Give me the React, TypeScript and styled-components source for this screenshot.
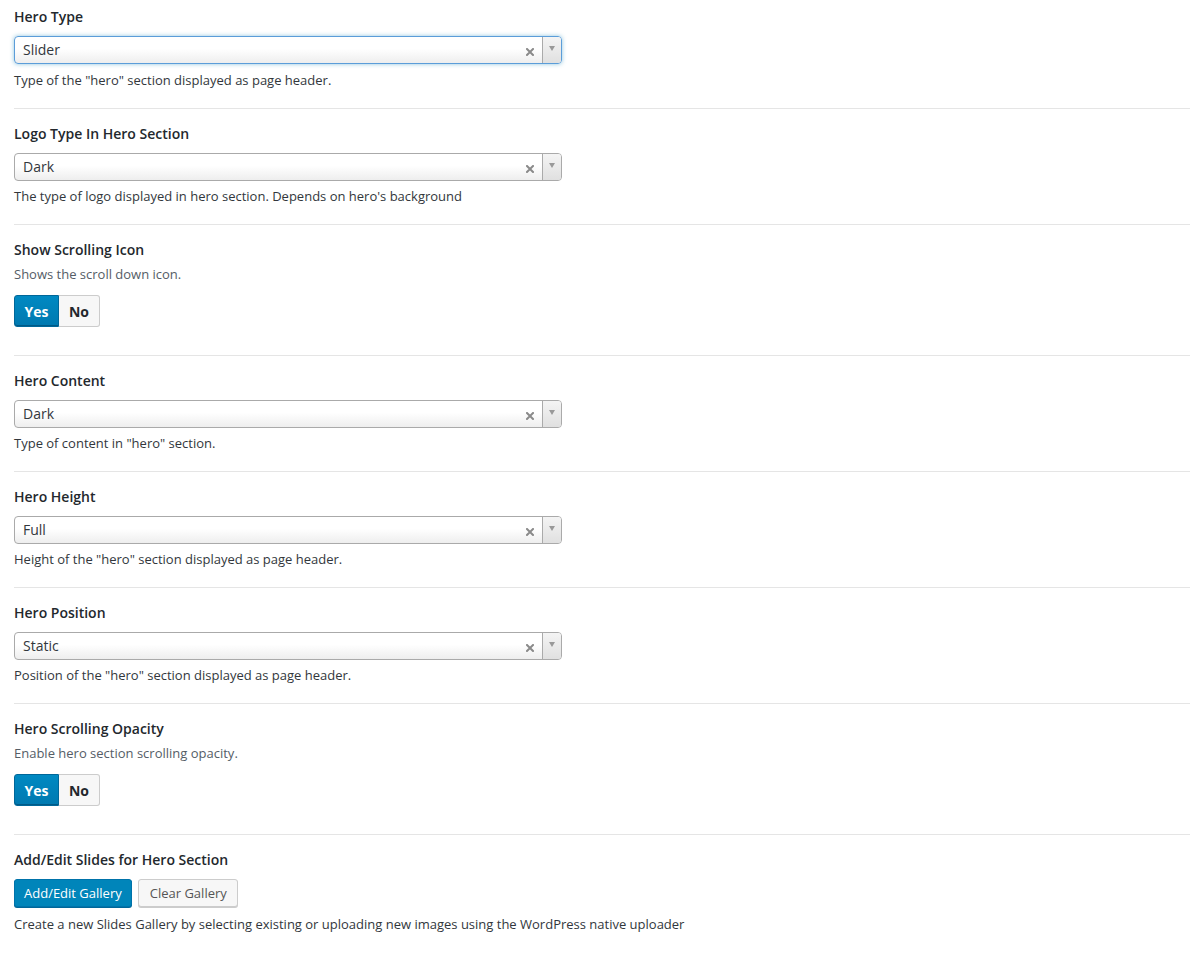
import React from "react";
import styled, { createGlobalStyle, css } from "styled-components";

const Global = createGlobalStyle`
  html, body { margin: 0; padding: 0; background: #fff; }
  body { font-family: "Open Sans", "Noto Sans", "Liberation Sans", sans-serif; color: #23282d; }
  * { box-sizing: border-box; }
`;

const Page = styled.div`
  padding: 0 0 0 14px;
  width: 1190px;
`;

const Section = styled.div<{ $first?: boolean; $last?: boolean; $toggle?: boolean }>`
  display: flex;
  flex-direction: column;
  align-items: flex-start;
  padding: ${(p) => (p.$first ? "7px" : "15px")} 0 ${(p) => (p.$toggle ? "28px" : "19px")} 0;
  border-bottom: ${(p) => (p.$last ? "none" : "1px solid #e5e5e5")};
`;

const Label = styled.div`
  font-size: 14px;
  font-weight: 600;
  line-height: 20px;
  color: #23282d;
`;

const Desc = styled.div<{ $gap?: number }>`
  font-size: 13px;
  line-height: 18px;
  color: #32373c;
  margin-top: ${(p) => p.$gap ?? 6}px;
`;

const SubDesc = styled.div`
  font-size: 13px;
  line-height: 18px;
  color: #555d66;
  margin-top: 5px;
`;

const SelectBox = styled.div<{ $focus?: boolean }>`
  margin-top: 9px;
  width: 548px;
  height: 28px;
  display: flex;
  align-items: stretch;
  border: 1px solid ${(p) => (p.$focus ? "#5b9dd9" : "#aaa")};
  border-radius: 4px;
  background: linear-gradient(to bottom, #fff 0%, #fff 45%, #eee 100%);
  ${(p) =>
    p.$focus &&
    css`
      box-shadow: 0 0 4px rgba(30, 140, 190, 0.5);
    `}
  overflow: hidden;
`;

const SelectValue = styled.div`
  flex: 1;
  padding-left: 8px;
  font-size: 14px;
  line-height: 26px;
  color: #32373c;
`;

const Clear = styled.div`
  width: 28px;
  display: flex;
  align-items: center;
  justify-content: center;
  padding-top: 3px;
  padding-left: 4px;
`;

const Arrow = styled.div`
  width: 19px;
  border-left: 1px solid #aaa;
  background: linear-gradient(to bottom, #f4f4f4 0%, #e0e0e0 100%);
  display: flex;
  align-items: center;
  justify-content: center;
  &::after {
    content: "";
    border-left: 3px solid transparent;
    border-right: 3px solid transparent;
    border-top: 5px solid #999;
    margin-top: -4px;
  }
`;

const Toggle = styled.div`
  margin-top: 12px;
  display: flex;
  height: 32px;
`;

const ToggleBtn = styled.div<{ $on?: boolean }>`
  display: flex;
  align-items: center;
  justify-content: center;
  font-size: 14px;
  font-weight: 700;
  height: 32px;
  ${(p) =>
    p.$on
      ? css`
          width: 45px;
          background: linear-gradient(to bottom, #0089c2, #0079b0);
          color: #fff;
          border: 1px solid #006799;
          border-radius: 3px 0 0 3px;
          box-shadow: inset 0 -1px 0 #005a87;
        `
      : css`
          width: 41px;
          background: #f7f7f7;
          color: #23282d;
          border: 1px solid #ccc;
          border-left: none;
          border-radius: 0 3px 3px 0;
        `}
`;

const ButtonRow = styled.div`
  margin-top: 9px;
  display: flex;
  gap: 6px;
`;

const Button = styled.div<{ $primary?: boolean }>`
  height: 28px;
  display: flex;
  align-items: center;
  font-size: 13px;
  border-radius: 3px;
  ${(p) =>
    p.$primary
      ? css`
          padding: 0 9px;
          background: #0085ba;
          border: 1px solid #0073aa;
          color: #fff;
          box-shadow: 0 1px 0 #006799;
        `
      : css`
          padding: 0 10px 0 11px;
          background: #f7f7f7;
          border: 1px solid #ccc;
          color: #555;
          box-shadow: 0 1px 0 #ccc;
        `}
`;

const ClearIcon = () => (
  <svg width="8" height="8" viewBox="0 0 8 8">
    <path d="M1 1L7 7M7 1L1 7" stroke="#8a8a8a" strokeWidth="2" strokeLinecap="square" />
  </svg>
);

function SelectField({
  label,
  value,
  desc,
  first,
  focus,
}: {
  label: string;
  value: string;
  desc: string;
  first?: boolean;
  focus?: boolean;
}) {
  return (
    <Section $first={first}>
      <Label>{label}</Label>
      <SelectBox $focus={focus}>
        <SelectValue>{value}</SelectValue>
        <Clear>
          <ClearIcon />
        </Clear>
        <Arrow />
      </SelectBox>
      <Desc $gap={first ? 7 : 6}>{desc}</Desc>
    </Section>
  );
}

function ToggleField({ label, desc }: { label: string; desc: string }) {
  return (
    <Section $toggle>
      <Label>{label}</Label>
      <SubDesc>{desc}</SubDesc>
      <Toggle>
        <ToggleBtn $on>Yes</ToggleBtn>
        <ToggleBtn>No</ToggleBtn>
      </Toggle>
    </Section>
  );
}

export default function App() {
  return (
    <Page>
      <Global />
      <SelectField
        first
        focus
        label="Hero Type"
        value="Slider"
        desc={'Type of the "hero" section displayed as page header.'}
      />
      <SelectField
        label="Logo Type In Hero Section"
        value="Dark"
        desc="The type of logo displayed in hero section. Depends on hero's background"
      />
      <ToggleField label="Show Scrolling Icon" desc="Shows the scroll down icon." />
      <SelectField
        label="Hero Content"
        value="Dark"
        desc={'Type of content in "hero" section.'}
      />
      <SelectField
        label="Hero Height"
        value="Full"
        desc={'Height of the "hero" section displayed as page header.'}
      />
      <SelectField
        label="Hero Position"
        value="Static"
        desc={'Position of the "hero" section displayed as page header.'}
      />
      <ToggleField
        label="Hero Scrolling Opacity"
        desc="Enable hero section scrolling opacity."
      />
      <Section $last>
        <Label>Add/Edit Slides for Hero Section</Label>
        <ButtonRow>
          <Button $primary>Add/Edit Gallery</Button>
          <Button>Clear Gallery</Button>
        </ButtonRow>
        <Desc $gap={8}>
          Create a new Slides Gallery by selecting existing or uploading new images using the
          WordPress native uploader
        </Desc>
      </Section>
    </Page>
  );
}
